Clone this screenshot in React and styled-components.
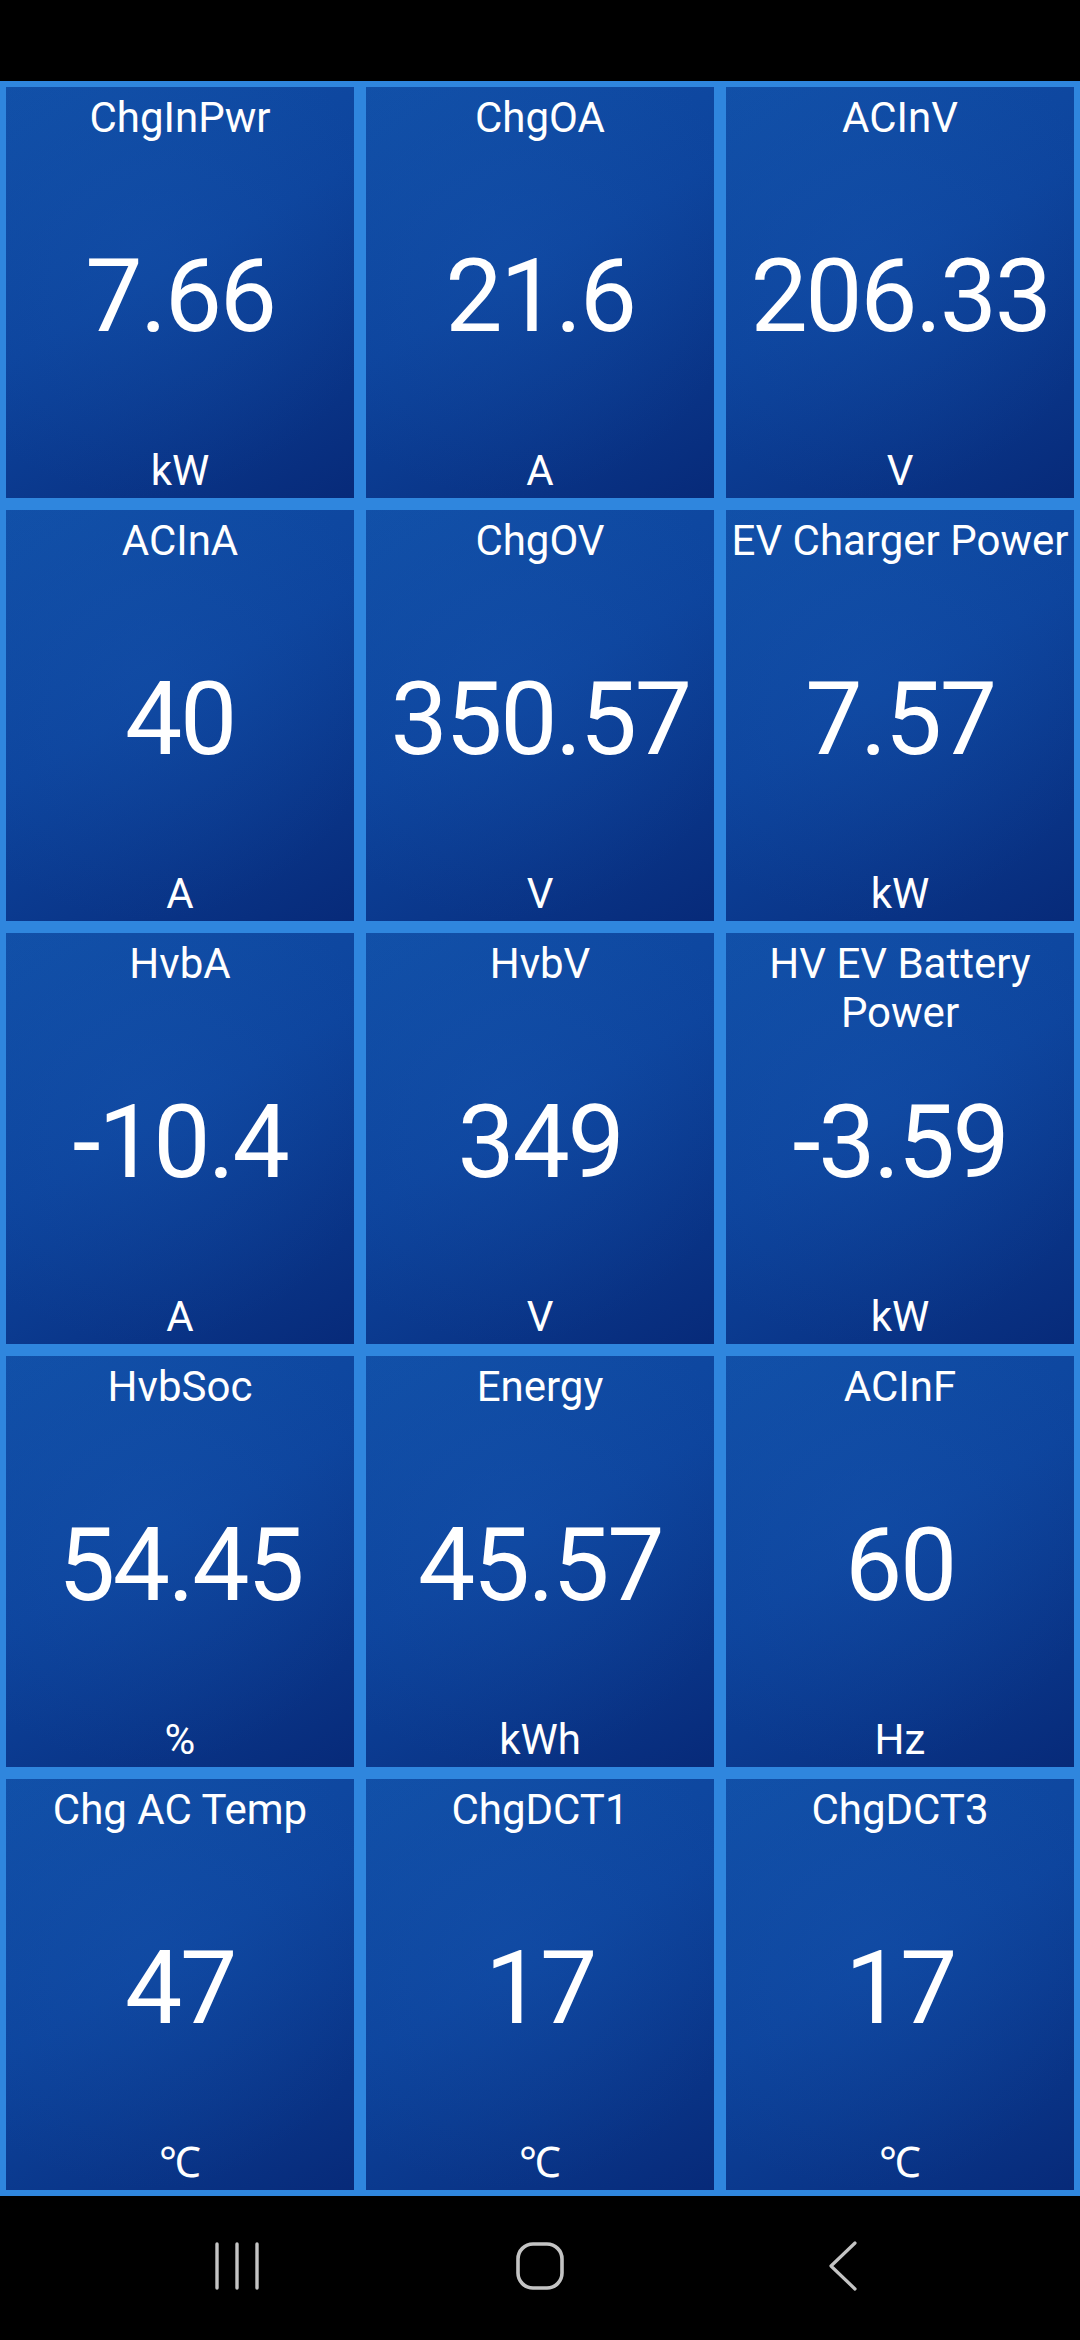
import React from "react";
import styled, { createGlobalStyle } from "styled-components";

const Global = createGlobalStyle`
  html, body { margin: 0; padding: 0; background: #000; }
  body { font-family: Roboto, "Noto Sans", "Liberation Sans", sans-serif; }
  * { box-sizing: border-box; }
`;

const Screen = styled.div`
  width: 1080px;
  height: 2340px;
  display: flex;
  flex-direction: column;
  background: #000;
`;

const StatusBar = styled.div`
  height: 81px;
  flex: none;
  background: #000;
`;

const Grid = styled.div`
  flex: none;
  height: 2115px;
  padding: 6px;
  gap: 12px;
  background: #2f86de;
  display: grid;
  grid-template-columns: repeat(3, 348px);
  grid-template-rows: repeat(5, 411px);
`;

const Cell = styled.div`
  display: grid;
  grid-template-rows: 1fr auto 1fr;
  justify-items: center;
  color: #fff;
  text-align: center;
  background:
    radial-gradient(ellipse 70% 60% at 40% 40%, rgba(24, 86, 176, 0.3), rgba(24, 86, 176, 0) 100%),
    linear-gradient(150deg, #1150a8 0%, #0d449d 45%, #072a79 100%);
  overflow: hidden;
`;

const Title = styled.div`
  align-self: start;
  padding: 6px 2px 0;
  font-size: 42px;
  line-height: 49px;
`;

const Value = styled.div`
  align-self: center;
  padding-top: 7px;
  font-size: 102px;
  line-height: 105px;
  letter-spacing: -2.4px;
  white-space: nowrap;
`;

const Unit = styled.div`
  align-self: end;
  padding-bottom: 3px;
  font-size: 42px;
  line-height: 49px;
`;

const NavBar = styled.div`
  flex: 1;
  background: #000;
  display: flex;
  justify-content: center;
  align-items: center;
  padding-bottom: 4px;
`;

const NavSlot = styled.div`
  width: 303px;
  display: flex;
  justify-content: center;
  align-items: center;
`;

const tiles = [
  ["ChgInPwr", "7.66", "kW"],
  ["ChgOA", "21.6", "A"],
  ["ACInV", "206.33", "V"],
  ["ACInA", "40", "A"],
  ["ChgOV", "350.57", "V"],
  ["EV Charger Power", "7.57", "kW"],
  ["HvbA", "-10.4", "A"],
  ["HvbV", "349", "V"],
  ["HV EV Battery Power", "-3.59", "kW"],
  ["HvbSoc", "54.45", "%"],
  ["Energy", "45.57", "kWh"],
  ["ACInF", "60", "Hz"],
  ["Chg AC Temp", "47", "℃"],
  ["ChgDCT1", "17", "℃"],
  ["ChgDCT3", "17", "℃"],
];

const stroke = "#c4c4c4";

export default function App() {
  return (
    <>
      <Global />
      <Screen>
        <StatusBar />
        <Grid>
          {tiles.map(([t, v, u], i) => (
            <Cell key={i}>
              <Title>{t}</Title>
              <Value>{v}</Value>
              <Unit>{u}</Unit>
            </Cell>
          ))}
        </Grid>
        <NavBar>
          <NavSlot>
            <svg width="50" height="48" viewBox="0 0 50 48">
              <line x1="5" y1="2" x2="5" y2="46" stroke={stroke} strokeWidth="3.4" strokeLinecap="round" />
              <line x1="25" y1="2" x2="25" y2="46" stroke={stroke} strokeWidth="3.4" strokeLinecap="round" />
              <line x1="45" y1="2" x2="45" y2="46" stroke={stroke} strokeWidth="3.4" strokeLinecap="round" />
            </svg>
          </NavSlot>
          <NavSlot>
            <svg width="50" height="50" viewBox="0 0 50 50">
              <rect x="3" y="3" width="44" height="44" rx="15" ry="15" fill="none" stroke={stroke} strokeWidth="3.6" />
            </svg>
          </NavSlot>
          <NavSlot>
            <svg width="32" height="50" viewBox="0 0 32 50">
              <polyline points="28,2 4,25 28,48" fill="none" stroke={stroke} strokeWidth="3.2" strokeLinecap="round" strokeLinejoin="round" />
            </svg>
          </NavSlot>
        </NavBar>
      </Screen>
    </>
  );
}
